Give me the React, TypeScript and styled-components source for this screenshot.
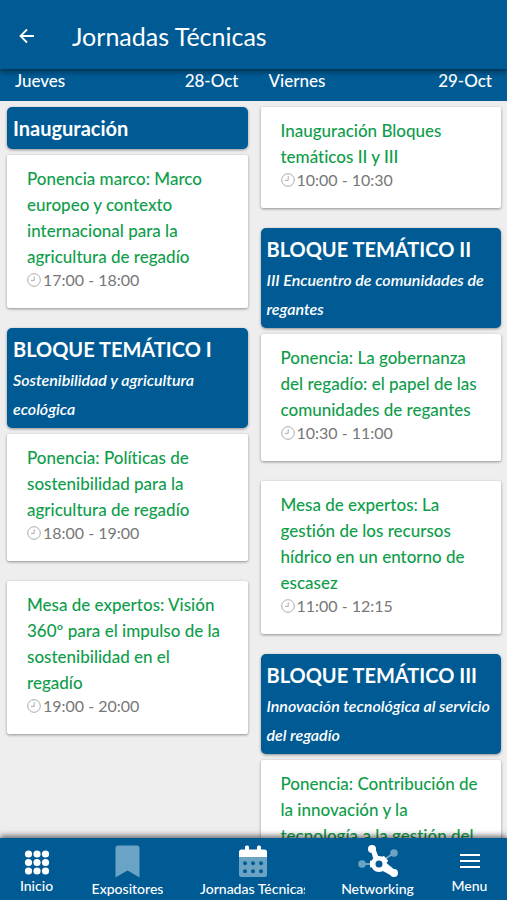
import React from "react";
import styled, { createGlobalStyle } from "styled-components";

const BLUE = "#005b95";

const GlobalStyle = createGlobalStyle`
  *, *::before, *::after { box-sizing: border-box; }
  body {
    margin: 0;
    background: #eeeeee;
    font-family: Lato, "Open Sans", sans-serif;
    font-variant-ligatures: none;
  }
  h1, h2, h3, p { margin: 0; }
`;

const Shell = styled.div`
  display: flex;
  flex-direction: column;
  height: 100vh;
  overflow: hidden;
`;

const TopBar = styled.header`
  display: flex;
  align-items: center;
  gap: 36px;
  flex: none;
  height: 69px;
  padding: 2px 18px 0;
  background: ${BLUE};
  color: #fff;
  box-shadow: 0 2px 6px rgba(0, 0, 0, 0.6);
  z-index: 1;
`;

const BackButton = styled.button`
  display: flex;
  padding: 0;
  border: 0;
  background: none;
  color: inherit;
  cursor: pointer;
`;

const Title = styled.h1`
  font-size: 25px;
  font-weight: 400;
  line-height: 30px;
`;

const Agenda = styled.main`
  flex: 1;
  min-height: 0;
  overflow: hidden;
  display: grid;
  grid-template-columns: 1fr 1fr;
  align-items: start;
`;

const DayHeading = styled.h2`
  display: flex;
  justify-content: space-between;
  height: 32px;
  padding: 0 15px;
  background: ${BLUE};
  color: #fff;
  font-size: 17px;
  font-weight: 500;
  line-height: 23px;
`;

const SlotList = styled.div`
  display: flex;
  flex-direction: column;
  padding: 6px 6px 0 7px;
`;

const Block = styled.section`
  margin-bottom: 6px;
  padding: 6px 6px 5px;
  border-radius: 5px;
  background: ${BLUE};
  color: #fff;
  box-shadow: 0 1px 3px rgba(0, 0, 0, 0.4);
`;

const BlockTitle = styled.h3`
  font-size: 20px;
  font-weight: 700;
  line-height: 31px;
`;

const BlockSubtitle = styled.p`
  font-size: 16px;
  font-style: italic;
  font-weight: 600;
  line-height: 29px;
`;

const Card = styled.article`
  margin-bottom: 20px;
  padding: 11px 22px 18px 20px;
  border-radius: 2px;
  background: #fff;
  box-shadow: 0 1px 3px rgba(0, 0, 0, 0.4);
`;

const CardTitle = styled.h3`
  color: #0f9d4b;
  font-size: 17px;
  font-weight: 500;
  line-height: 26px;
`;

const Time = styled.p`
  display: flex;
  align-items: center;
  gap: 2px;
  color: #777;
  font-size: 16px;
  line-height: 20px;
`;

const BottomNav = styled.nav`
  display: grid;
  grid-template-columns: 65px 1fr 1fr 1fr 67px;
  flex: none;
  height: 62px;
  background: ${BLUE};
  box-shadow: 0 -2px 6px rgba(0, 0, 0, 0.6);
  z-index: 1;
`;

const NavButton = styled.button<{ $edge?: "start" | "end" }>`
  display: flex;
  flex-direction: column;
  align-items: center;
  justify-content: flex-start;
  min-width: 0;
  padding: 6px 0 0;
  padding-left: ${(p) => (p.$edge === "start" ? "8px" : "0")};
  padding-right: ${(p) => (p.$edge === "end" ? "8px" : "0")};
  border: 0;
  background: none;
  color: #fff;
  font-family: inherit;
  cursor: pointer;
`;

const NavLabel = styled.span`
  max-width: 105px;
  overflow: hidden;
  font-size: 14px;
  font-weight: 500;
  line-height: 20px;
  white-space: nowrap;
`;

const BackIcon = () => (
  <svg width="18" height="18" viewBox="0 0 18 18" fill="none" stroke="currentColor" strokeWidth="1.8" aria-hidden="true">
    <path d="M16 9H3M9 2.5 2.5 9 9 15.5" />
  </svg>
);

const ClockIcon = () => (
  <svg width="14" height="14" viewBox="0 0 14 14" fill="none" stroke="#aaa" aria-hidden="true">
    <circle cx="7" cy="7" r="6.3" />
    <path d="M7.2 3.2v4.2H4" />
  </svg>
);

const GridIcon = () => (
  <svg width="26" height="32" viewBox="0 0 26 32" fill="#fff" aria-hidden="true">
    {[10, 18.5, 27].map((y) =>
      [4.5, 13, 21.5].map((x) => <circle key={`${x}-${y}`} cx={x} cy={y} r="3.6" />),
    )}
  </svg>
);

const BookmarkIcon = () => (
  <svg width="25" height="35" viewBox="0 0 25 35" fill="#6ba3c4" aria-hidden="true">
    <path d="M3 1.5h19a2.5 2.5 0 0 1 2.5 2.5V33.5L12.5 26.5.5 33.5V4A2.5 2.5 0 0 1 3 1.5z" />
  </svg>
);

const CalendarIcon = () => (
  <svg width="30" height="35" viewBox="0 0 30 35" aria-hidden="true">
    <path d="M1 12h28v18.5a2.5 2.5 0 0 1-2.5 2.5h-23A2.5 2.5 0 0 1 1 30.5z" fill="#6ba3c4" />
    <path d="M1 13V8a2.5 2.5 0 0 1 2.5-2.5H7V3a1.5 1.5 0 0 1 1.5-1.5h1A1.5 1.5 0 0 1 11 3v2.5h8V3a1.5 1.5 0 0 1 1.5-1.5h1A1.5 1.5 0 0 1 23 3v2.5h3.5A2.5 2.5 0 0 1 29 8v5z" fill="#fff" />
    {[19.3, 27.3].map((y) =>
      [7, 15, 23].map((x) => <circle key={`${x}-${y}`} cx={x} cy={y} r="2" fill={BLUE} />),
    )}
  </svg>
);

const NetworkIcon = () => (
  <svg width="42" height="35" viewBox="0 0 42 35" aria-hidden="true">
    <path d="M5 20h9M28 15l9-6" stroke="#6ba3c4" strokeWidth="2" />
    <circle cx="5" cy="20" r="3.8" fill="#6ba3c4" />
    <circle cx="37" cy="9" r="3.8" fill="#6ba3c4" />
    <path d="M14 6.5l4-2.5 4 10h-6zM28 18l10 8-3 6-11-6z" fill="#fff" />
    <path d="M14 17.500v5M26.500 13l3.500 4" stroke="#fff" strokeWidth="2" strokeLinecap="round" />
    <circle cx="15" cy="5" r="4" fill="#fff" />
    <circle cx="37" cy="29" r="4" fill="#fff" />
    <circle cx="22" cy="20" r="5.8" fill={BLUE} stroke="#fff" strokeWidth="4.6" />
  </svg>
);

const MenuIcon = () => (
  <svg width="22" height="32" viewBox="0 0 22 32" stroke="#fff" strokeWidth="2" aria-hidden="true">
    <path d="M1 11h20M1 17h20M1 23h20" />
  </svg>
);

type Slot =
  | { kind: "block"; title: string; subtitle?: string }
  | { kind: "talk"; title: string; time?: string };

type Day = { name: string; date: string; slots: Slot[] };

const days: Day[] = [
  {
    name: "Jueves",
    date: "28-Oct",
    slots: [
      { kind: "block", title: "Inauguración" },
      { kind: "talk", title: "Ponencia marco: Marco europeo y contexto internacional para la agricultura de regadío", time: "17:00 - 18:00" },
      { kind: "block", title: "BLOQUE TEMÁTICO I", subtitle: "Sostenibilidad y agricultura ecológica" },
      { kind: "talk", title: "Ponencia: Políticas de sostenibilidad para la agricultura de regadío", time: "18:00 - 19:00" },
      { kind: "talk", title: "Mesa de expertos: Visión 360º para el impulso de la sostenibilidad en el regadío", time: "19:00 - 20:00" },
    ],
  },
  {
    name: "Viernes",
    date: "29-Oct",
    slots: [
      { kind: "talk", title: "Inauguración Bloques temáticos II y III", time: "10:00 - 10:30" },
      { kind: "block", title: "BLOQUE TEMÁTICO II", subtitle: "III Encuentro de comunidades de regantes" },
      { kind: "talk", title: "Ponencia: La gobernanza del regadío: el papel de las comunidades de regantes", time: "10:30 - 11:00" },
      { kind: "talk", title: "Mesa de expertos: La gestión de los recursos hídrico en un entorno de escasez", time: "11:00 - 12:15" },
      { kind: "block", title: "BLOQUE TEMÁTICO III", subtitle: "Innovación tecnológica al servicio del regadío" },
      { kind: "talk", title: "Ponencia: Contribución de la innovación y la tecnología a la gestión del" },
    ],
  },
];

const navItems: { label: string; icon: React.ReactNode; edge?: "start" | "end" }[] = [
  { label: "Inicio", icon: <GridIcon />, edge: "start" },
  { label: "Expositores", icon: <BookmarkIcon /> },
  { label: "Jornadas Técnicas", icon: <CalendarIcon /> },
  { label: "Networking", icon: <NetworkIcon /> },
  { label: "Menu", icon: <MenuIcon />, edge: "end" },
];

export default function App() {
  return (
    <>
      <GlobalStyle />
      <Shell>
        <TopBar>
          <BackButton type="button" aria-label="Volver">
            <BackIcon />
          </BackButton>
          <Title>Jornadas Técnicas</Title>
        </TopBar>
        <Agenda>
          {days.map((day) => (
            <section key={day.name}>
              <DayHeading>
                <span>{day.name}</span>
                <span>{day.date}</span>
              </DayHeading>
              <SlotList>
                {day.slots.map((slot) =>
                  slot.kind === "block" ? (
                    <Block key={slot.title}>
                      <BlockTitle>{slot.title}</BlockTitle>
                      {slot.subtitle && <BlockSubtitle>{slot.subtitle}</BlockSubtitle>}
                    </Block>
                  ) : (
                    <Card key={slot.title}>
                      <CardTitle>{slot.title}</CardTitle>
                      {slot.time && (
                        <Time>
                          <ClockIcon />
                          {slot.time}
                        </Time>
                      )}
                    </Card>
                  ),
                )}
              </SlotList>
            </section>
          ))}
        </Agenda>
        <BottomNav>
          {navItems.map((item) => (
            <NavButton key={item.label} type="button" $edge={item.edge}>
              {item.icon}
              <NavLabel>{item.label}</NavLabel>
            </NavButton>
          ))}
        </BottomNav>
      </Shell>
    </>
  );
}
